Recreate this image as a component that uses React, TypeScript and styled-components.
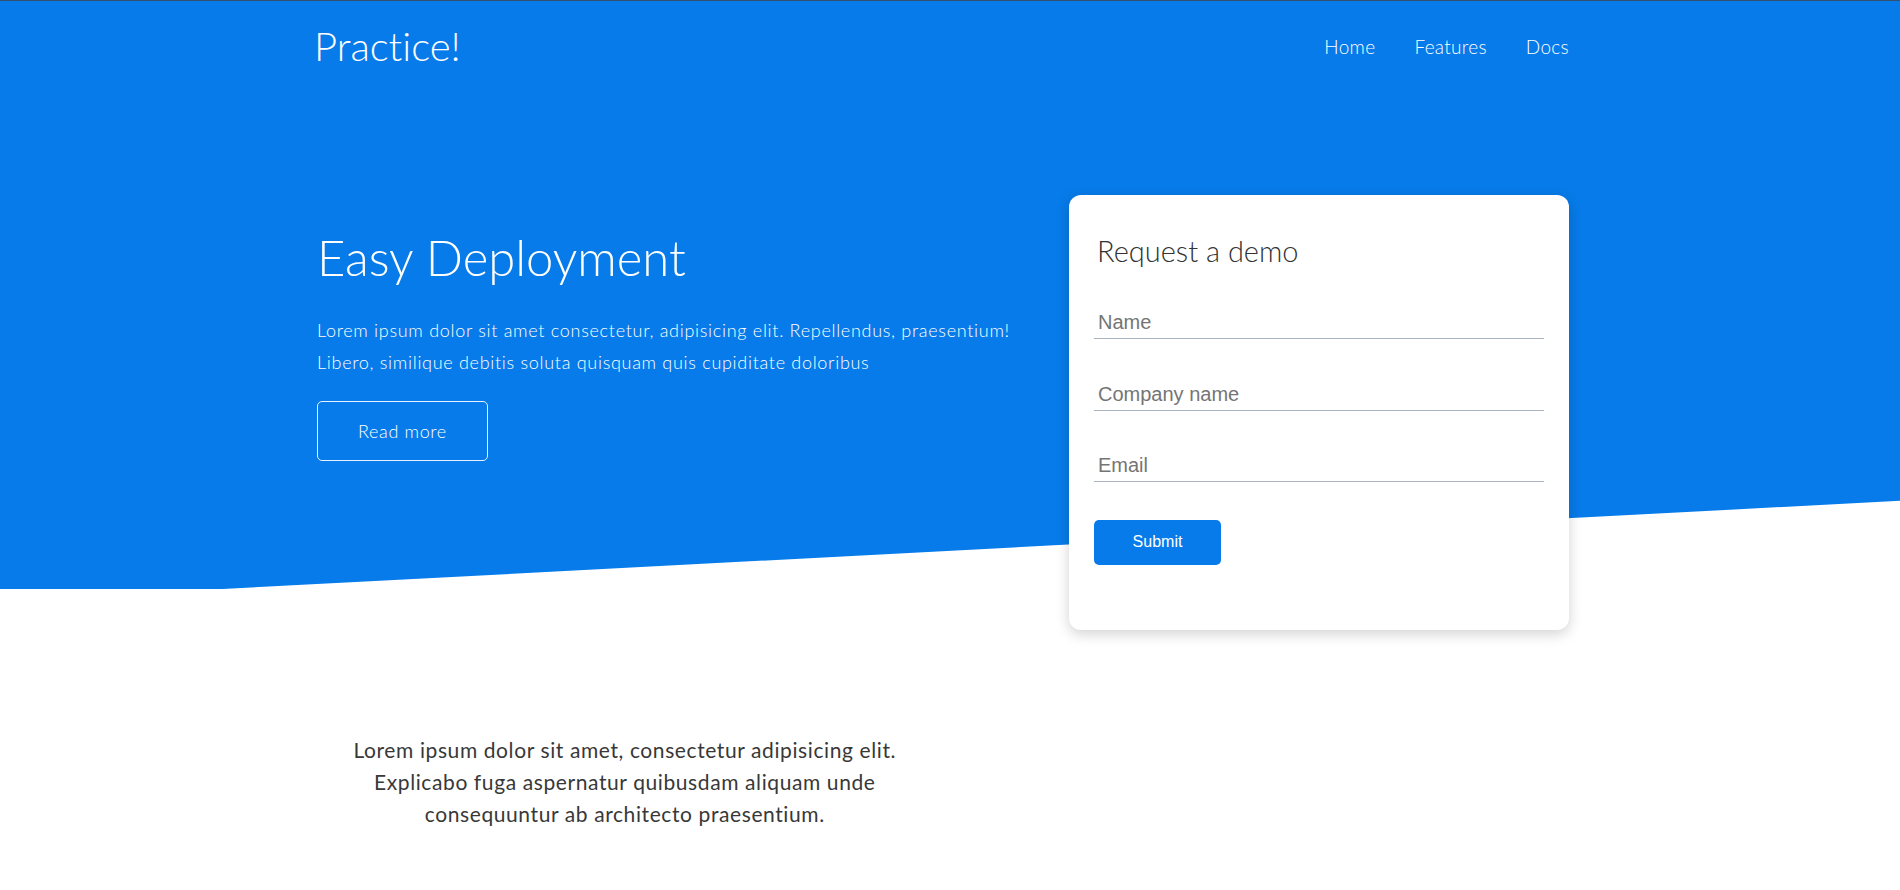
import styled, { createGlobalStyle } from 'styled-components';

const BLUE = '#077be9';

const GlobalStyle = createGlobalStyle`
  * {
    box-sizing: border-box;
  }

  body {
    margin: 0;
    font-family: Lato, 'Open Sans', sans-serif;
    font-variant-ligatures: no-common-ligatures;
    background: #fff;
    color: #333;
  }
`;

const navItems = ['Home', 'Features', 'Docs'];
const fields = ['Name', 'Company name', 'Email'];

export default function App() {
  return (
    <SPage>
      <GlobalStyle />
      <SHero>
        <SContainer>
          <SHeader>
            <SLogo>Practice!</SLogo>
            <SNav>
              {navItems.map((item) => (
                <SNavLink key={item} href="#">
                  {item}
                </SNavLink>
              ))}
            </SNav>
          </SHeader>
          <SHeroBody>
            <SHeroText>
              <h1>Easy Deployment</h1>
              <p>
                Lorem ipsum dolor sit amet consectetur, adipisicing elit. Repellendus, praesentium! Libero,
                similique debitis soluta quisquam quis cupiditate doloribus
              </p>
              <SOutlineButton>Read more</SOutlineButton>
            </SHeroText>
            <SDemoCard>
              <h2>Request a demo</h2>
              <SForm onSubmit={(e) => e.preventDefault()}>
                {fields.map((field) => (
                  <SInput key={field} type="text" placeholder={field} />
                ))}
                <SSubmit type="submit">Submit</SSubmit>
              </SForm>
            </SDemoCard>
          </SHeroBody>
        </SContainer>
      </SHero>
      <SFeatures>
        <SContainer>
          <SFeatureGrid>
            <p>
              Lorem ipsum dolor sit amet, consectetur adipisicing elit. Explicabo fuga aspernatur quibusdam
              aliquam unde consequuntur ab architecto praesentium.
            </p>
            <div />
          </SFeatureGrid>
        </SContainer>
      </SFeatures>
    </SPage>
  );
}

const SPage = styled.div`
  min-height: 890px;
  border-top: 1px solid #33506c;
  overflow: hidden;
`;

const SHero = styled.section`
  position: relative;
  z-index: 0;

  &::before {
    content: '';
    position: absolute;
    top: 0;
    left: 0;
    right: 0;
    height: 588px;
    background-color: ${BLUE};
    clip-path: polygon(0 0, 100% 0, 100% 85%, 11.7% 100%, 0 100%);
    z-index: -1;
  }
`;

const SContainer = styled.div`
  width: 1255px;
  margin-left: calc(50% - 636px);
`;

const SHeader = styled.header`
  display: flex;
  align-items: center;
  justify-content: space-between;
  height: 90px;
`;

const SLogo = styled.a`
  font-size: 40px;
  font-weight: 300;
  color: #fff;
  line-height: 1;
`;

const SNav = styled.nav`
  display: flex;
  gap: 39px;
`;

const SNavLink = styled.a`
  font-size: 19px;
  font-weight: 300;
  letter-spacing: 0.3px;
  color: #fff;
  text-decoration: none;
`;

const SHeroBody = styled.div`
  display: flex;
  align-items: flex-start;
  margin-top: 104px;
`;

const SHeroText = styled.div`
  flex: 1;
  padding: 32px 0 0 3px;
  color: #fff;

  h1 {
    margin: 0;
    font-size: 49px;
    font-weight: 300;
    line-height: 1.25;
  }

  p {
    max-width: 720px;
    margin: 26px 0 23px;
    font-size: 18px;
    font-weight: 300;
    letter-spacing: 0.7px;
    line-height: 32px;
  }
`;

const SOutlineButton = styled.button`
  padding: 18px 40px;
  font-family: Lato, sans-serif;
  font-size: 18px;
  font-weight: 300;
  letter-spacing: 0.65px;
  color: #fff;
  background: transparent;
  border: 1px solid rgba(255, 255, 255, 0.9);
  border-radius: 5px;
  cursor: pointer;
`;

const SDemoCard = styled.div`
  width: 500px;
  padding: 25px 25px 65px;
  background-color: #fff;
  border-radius: 12px;
  box-shadow: 0 4px 14px rgba(0, 0, 0, 0.18);

  h2 {
    margin: 13px 0 0 3px;
    font-size: 29px;
    font-weight: 300;
    line-height: 36px;
    color: #333;
  }
`;

const SForm = styled.form`
  display: flex;
  flex-direction: column;
  align-items: flex-start;
  gap: 39.5px;
  padding-top: 38px;
`;

const SInput = styled.input`
  width: 100%;
  padding: 4px 4px;
  font-family: 'Liberation Sans', Arial, sans-serif;
  font-size: 20px;
  color: #333;
  border: none;
  border-bottom: 1px solid #aab3c0;
  outline: none;
  background: transparent;

  &::placeholder {
    color: #757575;
  }
`;

const SSubmit = styled.button`
  width: 127px;
  height: 45px;
  margin-top: -2px;
  font-family: 'Liberation Sans', Arial, sans-serif;
  font-size: 16px;
  color: #fff;
  background-color: ${BLUE};
  border: none;
  border-radius: 5px;
  cursor: pointer;
`;

const SFeatures = styled.section`
  padding-top: 104px;
`;

const SFeatureGrid = styled.div`
  display: grid;
  grid-template-columns: 1fr 1fr;

  p {
    margin: 0;
    padding: 0 6px 0 0;
    font-size: 21px;
    letter-spacing: 0.6px;
    line-height: 32px;
    text-align: center;
    color: #383838;
  }
`;
